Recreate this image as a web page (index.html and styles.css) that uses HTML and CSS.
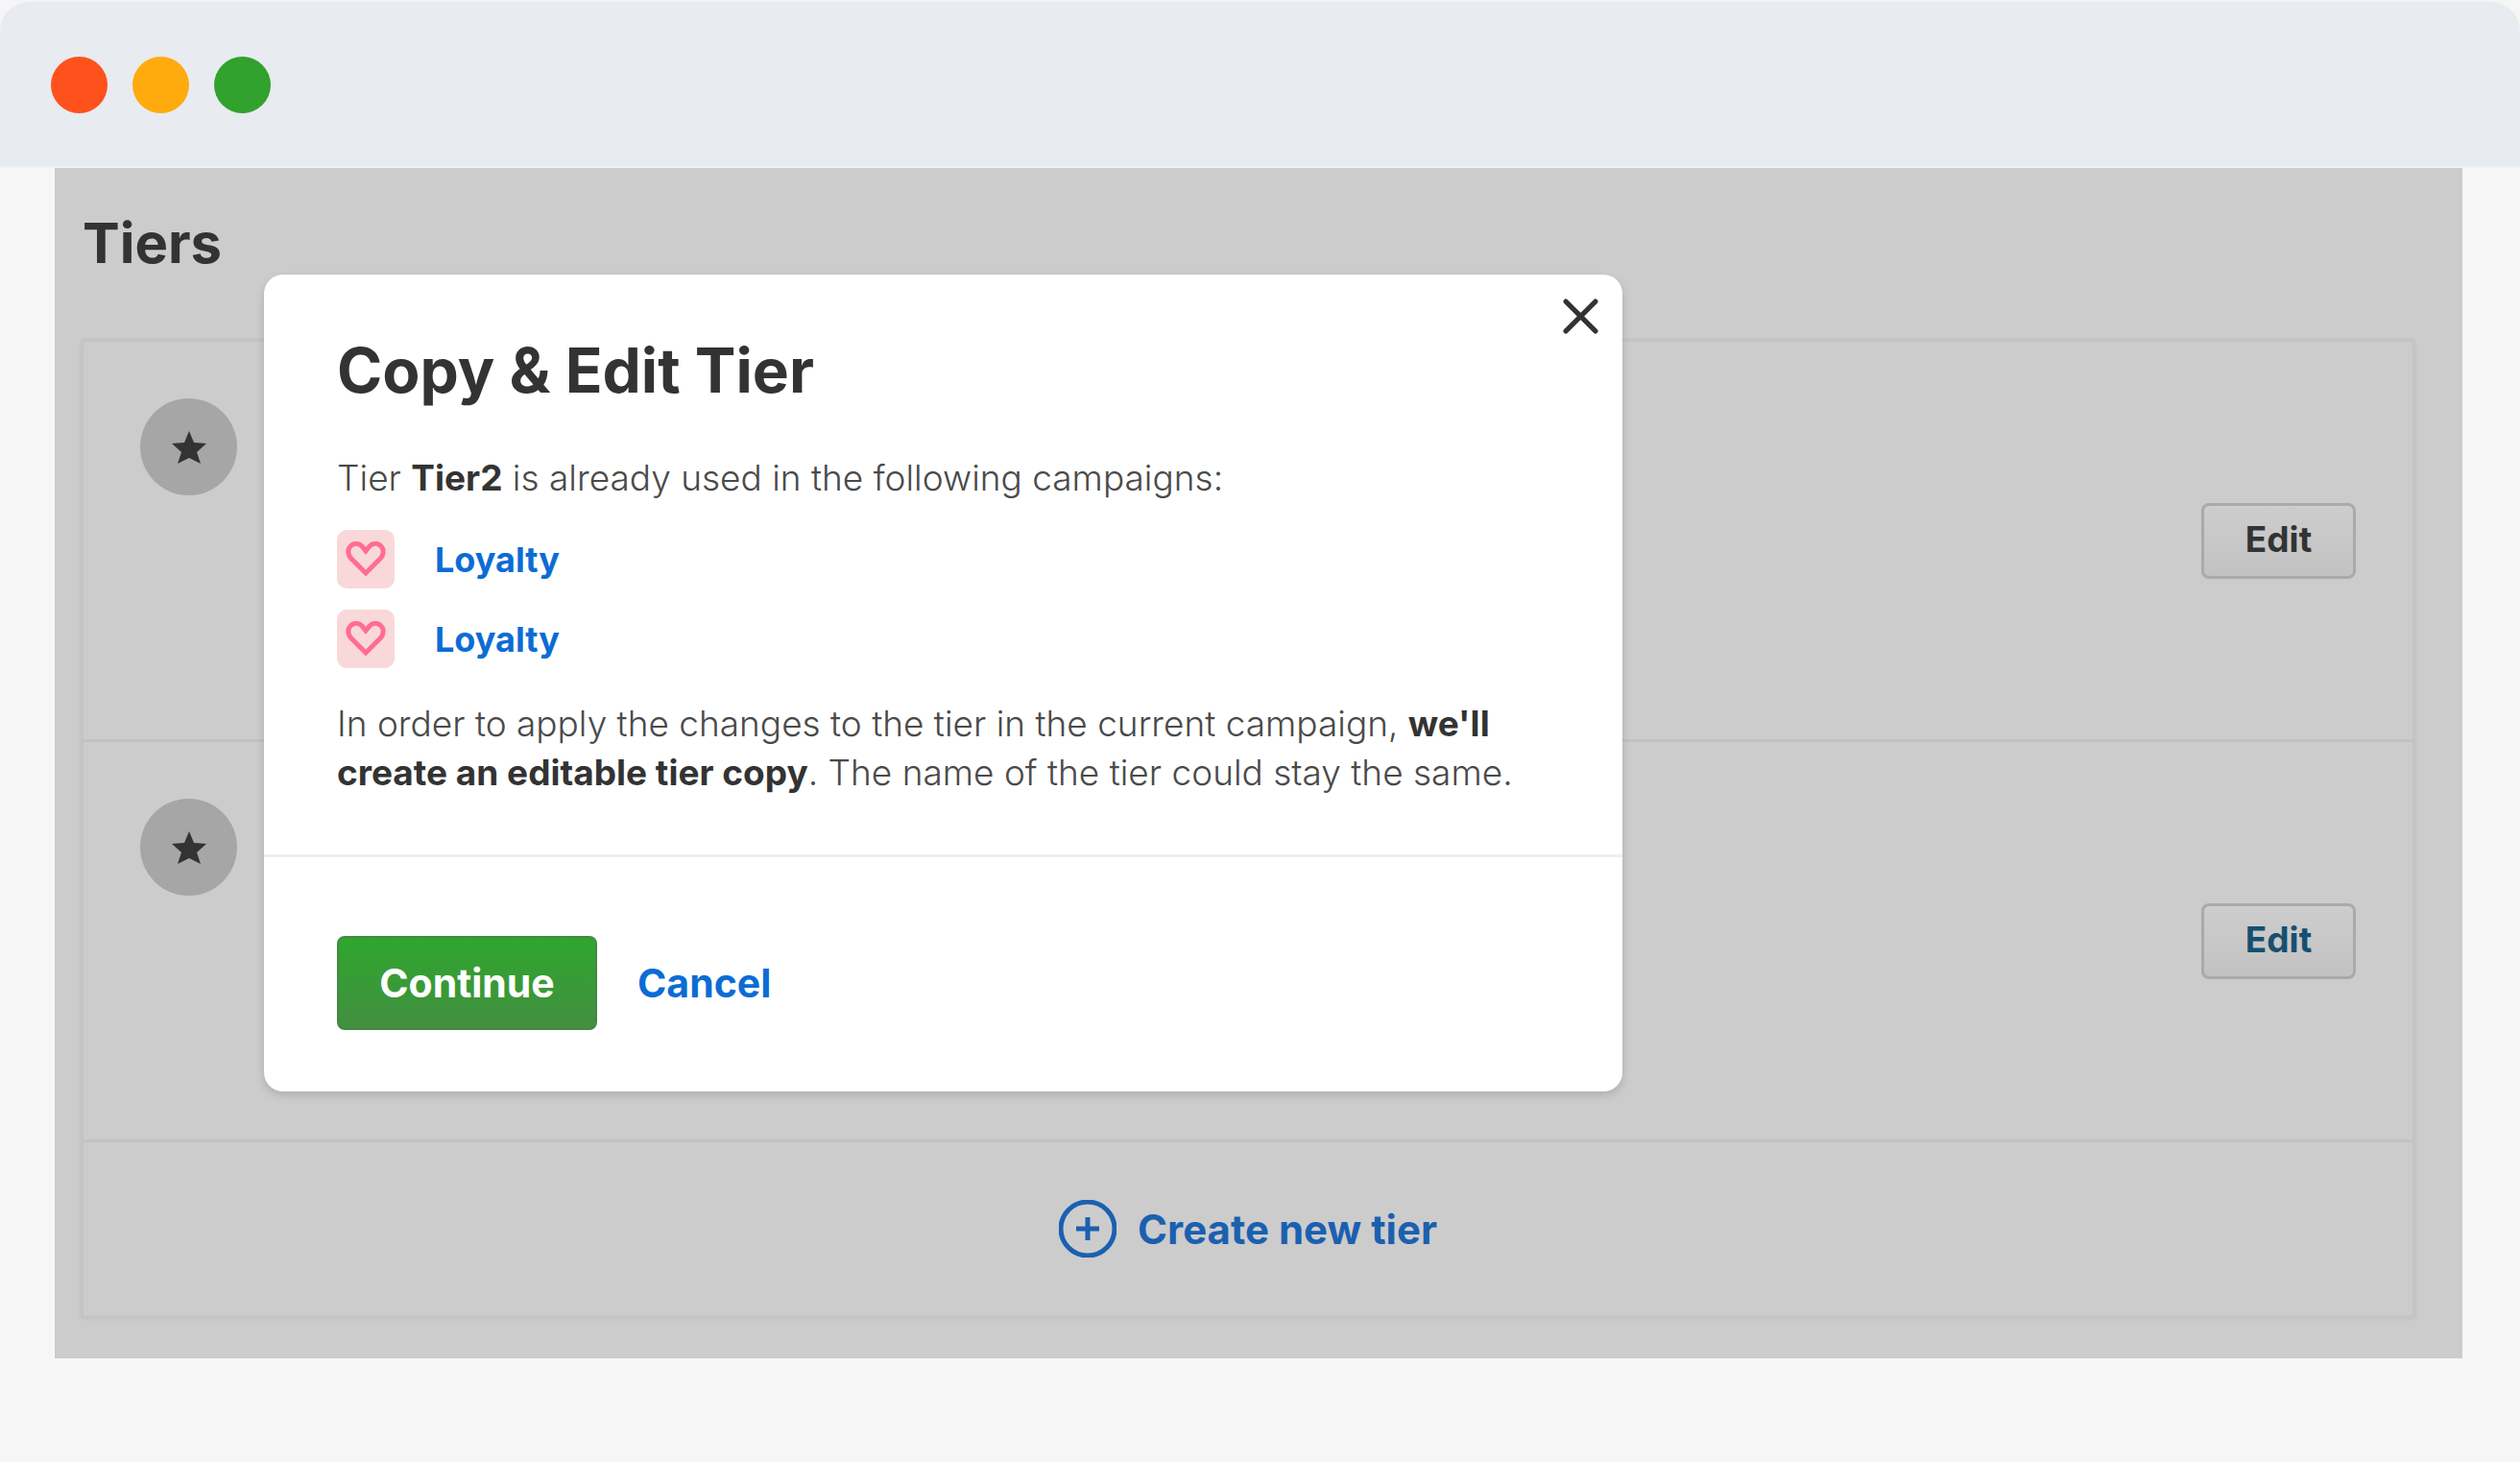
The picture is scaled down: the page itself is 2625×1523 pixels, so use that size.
FILE: index.html
```html
<!DOCTYPE html>
<html lang="en">
<head>
    <meta charset="UTF-8">
    <meta name="viewport" content="width=device-width, initial-scale=1.0">
    <title>Tiers</title>
    <link rel="stylesheet" href="styles.css">
</head>
<body>
    <header class="window-bar">
        <span class="dot red"></span>
        <span class="dot yellow"></span>
        <span class="dot green"></span>
    </header>
    <main class="app">
        <h1>Tiers</h1>
        <div class="tiers">
            <div class="tier">
                <span class="tier-icon">
                    <svg viewBox="0 0 38 36"><path d="M19 1l5 12 13 1-10 9 4 12-12-6-12 6 4-12L1 14l13-1z"/></svg>
                </span>
                <button class="edit">Edit</button>
            </div>
            <div class="tier">
                <span class="tier-icon">
                    <svg viewBox="0 0 38 36"><path d="M19 1l5 12 13 1-10 9 4 12-12-6-12 6 4-12L1 14l13-1z"/></svg>
                </span>
                <button class="edit focused">Edit</button>
            </div>
            <div class="create">
                <button class="create-btn">
                    <svg viewBox="0 0 60 60"><circle cx="30" cy="30" r="28"/><path d="M30 18v24M18 30h24"/></svg>
                    Create new tier
                </button>
            </div>
        </div>

        <div class="modal" role="dialog" aria-labelledby="modal-title">
            <button class="close" aria-label="Close">
                <svg viewBox="0 0 36 36"><path d="M3 3l30 30M33 3L3 33"/></svg>
            </button>
            <div class="modal-body">
                <h2 id="modal-title">Copy &amp; Edit Tier</h2>
                <p>Tier <b>Tier2</b> is already used in the following campaigns:</p>
                <ul class="campaigns">
                    <li>
                        <span class="heart"><svg viewBox="0 0 42 38"><path d="M21 33L6 18C2 14 2 8 5 5c4-4 9-3 12 0l4 5 4-5c3-3 8-4 12 0 3 3 3 9-1 13z"/></svg></span>
                        <a href="#">Loyalty</a>
                    </li>
                    <li>
                        <span class="heart"><svg viewBox="0 0 42 38"><path d="M21 33L6 18C2 14 2 8 5 5c4-4 9-3 12 0l4 5 4-5c3-3 8-4 12 0 3 3 3 9-1 13z"/></svg></span>
                        <a href="#">Loyalty</a>
                    </li>
                </ul>
                <p>In order to apply the changes to the tier in the current campaign, <b>we'll create an editable tier copy</b>. The name of the tier could stay the same.</p>
            </div>
            <div class="modal-footer">
                <button class="continue">Continue</button>
                <button class="cancel">Cancel</button>
            </div>
        </div>
    </main>
</body>
</html>
```
FILE: styles.css
```css
* {
    box-sizing: border-box;
}
body {
    margin: 0;
    background-color: #f6f6f6;
    color: #333333;
    font-family: Inter, "Liberation Sans", sans-serif;
    font-size: 36px;
}
button {
    font-family: inherit;
    font-weight: 700;
    cursor: pointer;
}
.window-bar {
    display: flex;
    align-items: center;
    gap: 26px;
    height: 175px;
    padding: 2px 53px 0;
    background-color: #e8ebef;
    border-radius: 32px 32px 0 0;
    border-top: 2px solid #f2f4f6;
    border-bottom: 2px solid #eff1f3;
}
.dot {
    width: 59px;
    height: 59px;
    border-radius: 50%;
}
.red {
    background-color: #ff511c;
}
.yellow {
    background-color: #ffaa0d;
}
.green {
    background-color: #30a22d;
}

.app {
    position: relative;
    margin: 0 60px 110px 57px;
    padding: 42px 49px 42px 27px;
    background-color: #cccccc;
}
h1 {
    margin: 0 0 64px;
    padding-left: 2px;
    font-size: 58px;
    line-height: 72px;
}
.tiers {
    border: 3px solid #c4c4c4;
    border-radius: 4px;
    box-shadow: 0 1px 4px rgba(0, 0, 0, 0.06);
}
.tier {
    display: flex;
    justify-content: space-between;
    align-items: center;
    height: 417px;
    padding: 0 59px;
    border-bottom: 3px solid #c2c2c2;
}
.tier-icon {
    display: flex;
    justify-content: center;
    align-items: center;
    align-self: flex-start;
    width: 101px;
    height: 101px;
    margin-top: 59px;
    border-radius: 50%;
    background-color: #a6a6a6;
}
.tier-icon svg {
    width: 38px;
    fill: #333333;
}
.edit {
    width: 161px;
    height: 79px;
    padding: 0 0 4px;
    border: 3px solid #aaaaaa;
    border-radius: 8px;
    background: linear-gradient(#cdcdcd, #c2c2c2);
    color: #333333;
    font-size: 37px;
}
.edit.focused {
    color: #174f70;
}
.create {
    display: flex;
    justify-content: center;
    align-items: center;
    height: 180px;
}
.create-btn {
    display: flex;
    align-items: center;
    gap: 22px;
    padding: 0;
    border: none;
    background: none;
    color: #1b60b0;
    font-size: 42px;
}
.create-btn svg {
    width: 60px;
    fill: none;
    stroke: #1b60b0;
    stroke-width: 5;
}

.modal {
    position: absolute;
    top: 111px;
    left: 218px;
    width: 1415px;
    border-radius: 20px;
    background-color: #ffffff;
    box-shadow: 0 4px 10px rgba(0, 0, 0, 0.14);
}
.close {
    position: absolute;
    top: 25px;
    right: 25px;
    display: flex;
    padding: 0;
    border: none;
    background: none;
}
.close svg {
    width: 37px;
    fill: none;
    stroke: #333333;
    stroke-width: 5;
    stroke-linecap: round;
}
.modal-body {
    padding: 64px 76px 60px;
    border-bottom: 3px solid #eeeeee;
}
h2 {
    margin: 0 0 50px;
    font-size: 64px;
    line-height: 72px;
}
p {
    margin: 0;
    color: #4a4a4a;
    font-size: 37px;
    font-weight: 300;
    line-height: 51px;
}
p b {
    color: #333333;
    font-weight: 700;
}
.campaigns {
    display: flex;
    flex-direction: column;
    gap: 22px;
    margin: 29px 0 32px;
    padding: 0;
    list-style: none;
}
.campaigns li {
    display: flex;
    align-items: center;
    gap: 42px;
}
.heart {
    display: flex;
    justify-content: center;
    align-items: center;
    width: 60px;
    height: 61px;
    border-radius: 10px;
    background-color: #f9d8da;
}
.heart svg {
    width: 42px;
    fill: none;
    stroke: #ff6d94;
    stroke-width: 5;
}
.campaigns a {
    color: #0c6cd4;
    font-weight: 700;
    text-decoration: none;
}
.modal-footer {
    display: flex;
    align-items: center;
    gap: 42px;
    padding: 82px 76px 64px;
}
.continue {
    width: 271px;
    height: 98px;
    border: 2px solid #458645;
    border-radius: 8px;
    background: linear-gradient(#2fa62d, #428f40);
    color: #ffffff;
    font-size: 41px;
}
.cancel {
    padding: 0;
    border: none;
    background: none;
    color: #0c6cd4;
    font-size: 41px;
}
```
